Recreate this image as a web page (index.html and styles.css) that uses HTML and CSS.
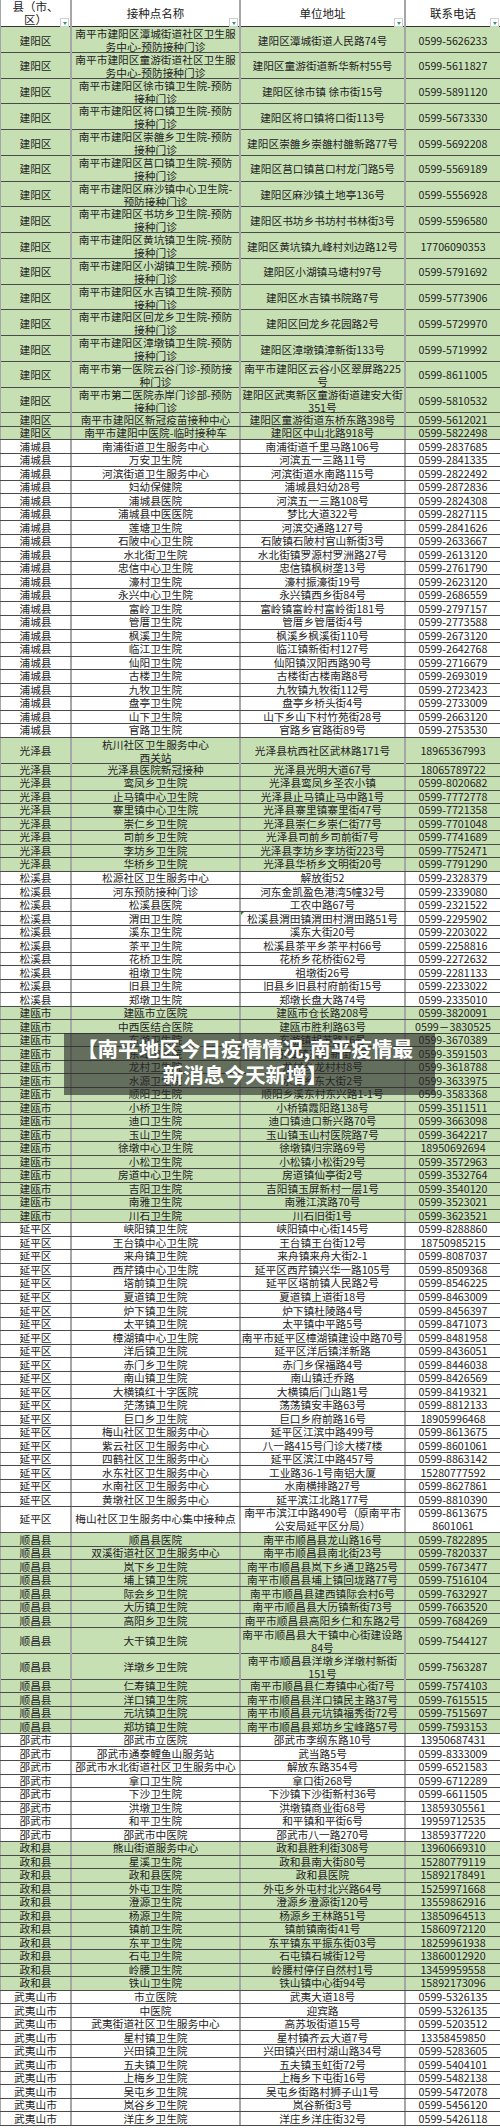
FILE: index.html
```html
<!DOCTYPE html>
<html lang="zh-CN">
<head>
<meta charset="utf-8">
<title>南平市新冠疫苗接种点</title>
<link rel="stylesheet" href="styles.css">
</head>
<body>
<div class="page">
<div class="sheet">
  <div class="row hd">
    <div class="c h">县（市、<br>区）<span class="flt"></span></div>
    <div class="c h">接种点名称<span class="flt"></span></div>
    <div class="c h">单位地址<span class="flt"></span></div>
    <div class="c h">联系电话<span class="flt"></span></div>
  </div>

  <div class="row g d"><div class="c">建阳区</div><div class="c">南平市建阳区潭城街道社区卫生服<br>务中心-预防接种门诊</div><div class="c">建阳区潭城街道人民路74号</div><div class="c">0599-5626233</div></div>
  <div class="row g d"><div class="c">建阳区</div><div class="c">南平市建阳区童游街道社区卫生服<br>务中心-预防接种门诊</div><div class="c">建阳区童游街道新华新村55号</div><div class="c">0599-5611827</div></div>
  <div class="row g d"><div class="c">建阳区</div><div class="c">南平市建阳区徐市镇卫生院-预防<br>接种门诊</div><div class="c">建阳区徐市镇 徐市街15号</div><div class="c">0599-5891120</div></div>
  <div class="row g d"><div class="c">建阳区</div><div class="c">南平市建阳区将口镇卫生院-预防<br>接种门诊</div><div class="c">建阳区将口镇将口街113号</div><div class="c">0599-5673330</div></div>
  <div class="row g d"><div class="c">建阳区</div><div class="c">南平市建阳区崇雒乡卫生院-预防<br>接种门诊</div><div class="c">建阳区崇雒乡崇雒村雒新路77号</div><div class="c">0599-5692208</div></div>
  <div class="row g d"><div class="c">建阳区</div><div class="c">南平市建阳区莒口镇卫生院-预防<br>接种门诊</div><div class="c">建阳区莒口镇莒口村龙门路5号</div><div class="c">0599-5569189</div></div>
  <div class="row g d"><div class="c">建阳区</div><div class="c">南平市建阳区麻沙镇中心卫生院-<br>预防接种门诊</div><div class="c">建阳区麻沙镇土地亭136号</div><div class="c">0599-5556928</div></div>
  <div class="row g d"><div class="c">建阳区</div><div class="c">南平市建阳区书坊乡卫生院-预防<br>接种门诊</div><div class="c">建阳区书坊乡书坊村书林街3号</div><div class="c">0599-5596580</div></div>
  <div class="row g d"><div class="c">建阳区</div><div class="c">南平市建阳区黄坑镇卫生院-预防<br>接种门诊</div><div class="c">建阳区黄坑镇九峰村刘边路12号</div><div class="c">17706090353</div></div>
  <div class="row g d"><div class="c">建阳区</div><div class="c">南平市建阳区小湖镇卫生院-预防<br>接种门诊</div><div class="c">建阳区小湖镇马塘村97号</div><div class="c">0599-5791692</div></div>
  <div class="row g d"><div class="c">建阳区</div><div class="c">南平市建阳区水吉镇卫生院-预防<br>接种门诊</div><div class="c">建阳区水吉镇书院路7号</div><div class="c">0599-5773906</div></div>
  <div class="row g d"><div class="c">建阳区</div><div class="c">南平市建阳区回龙乡卫生院-预防<br>接种门诊</div><div class="c">建阳区回龙乡花园路2号</div><div class="c">0599-5729970</div></div>
  <div class="row g d"><div class="c">建阳区</div><div class="c">南平市建阳区漳墩镇卫生院-预防<br>接种门诊</div><div class="c">建阳区漳墩镇漳新街133号</div><div class="c">0599-5719992</div></div>
  <div class="row g d"><div class="c">建阳区</div><div class="c">南平市第一医院云谷门诊-预防接<br>种门诊</div><div class="c">南平市建阳区云谷小区翠屏路225<br>号</div><div class="c">0599-8611005</div></div>
  <div class="row g d"><div class="c">建阳区</div><div class="c">南平市第二医院赤岸门诊部-预防<br>接种门诊</div><div class="c">建阳区武夷新区童游街道建安大街<br>351号</div><div class="c">0599-5810532</div></div>
  <div class="row g"><div class="c">建阳区</div><div class="c">南平市建阳区新冠疫苗接种中心</div><div class="c">建阳区童游街道东桥东路398号</div><div class="c">0599-5612021</div></div>
  <div class="row g"><div class="c">建阳区</div><div class="c">南平市建阳中医院-临时接种车</div><div class="c">建阳区中山北路918号</div><div class="c">0599-5822498</div></div>

  <div class="row"><div class="c">浦城县</div><div class="c">南浦街道卫生服务中心</div><div class="c">南浦街道千里马路106号</div><div class="c">0599-2837685</div></div>
  <div class="row"><div class="c">浦城县</div><div class="c">万安卫生院</div><div class="c">河滨五一三路11号</div><div class="c">0599-2841335</div></div>
  <div class="row"><div class="c">浦城县</div><div class="c">河滨街道卫生服务中心</div><div class="c">河滨街道水南路115号</div><div class="c">0599-2822492</div></div>
  <div class="row"><div class="c">浦城县</div><div class="c">妇幼保健院</div><div class="c">浦城县妇幼28号</div><div class="c">0599-2872836</div></div>
  <div class="row"><div class="c">浦城县</div><div class="c">浦城县医院</div><div class="c">河滨五一三路108号</div><div class="c">0599-2824308</div></div>
  <div class="row"><div class="c">浦城县</div><div class="c">浦城县中医医院</div><div class="c">梦比大道322号</div><div class="c">0599-2827115</div></div>
  <div class="row"><div class="c">浦城县</div><div class="c">莲塘卫生院</div><div class="c">河滨交通路127号</div><div class="c">0599-2841626</div></div>
  <div class="row"><div class="c">浦城县</div><div class="c">石陂中心卫生院</div><div class="c">石陂镇石陂村官山新街3号</div><div class="c">0599-2633667</div></div>
  <div class="row"><div class="c">浦城县</div><div class="c">水北街卫生院</div><div class="c">水北街镇罗源村罗洲路27号</div><div class="c">0599-2613120</div></div>
  <div class="row"><div class="c">浦城县</div><div class="c">忠信中心卫生院</div><div class="c">忠信镇枫树垄13号</div><div class="c">0599-2761790</div></div>
  <div class="row"><div class="c">浦城县</div><div class="c">濠村卫生院</div><div class="c">濠村振濠街19号</div><div class="c">0599-2623120</div></div>
  <div class="row"><div class="c">浦城县</div><div class="c">永兴中心卫生院</div><div class="c">永兴镇西乡街84号</div><div class="c">0599-2686559</div></div>
  <div class="row"><div class="c">浦城县</div><div class="c">富岭卫生院</div><div class="c">富岭镇富岭村富岭街181号</div><div class="c">0599-2797157</div></div>
  <div class="row"><div class="c">浦城县</div><div class="c">管厝卫生院</div><div class="c">管厝乡管厝街4号</div><div class="c">0599-2773588</div></div>
  <div class="row"><div class="c">浦城县</div><div class="c">枫溪卫生院</div><div class="c">枫溪乡枫溪街110号</div><div class="c">0599-2673120</div></div>
  <div class="row"><div class="c">浦城县</div><div class="c">临江卫生院</div><div class="c">临江镇新街村127号</div><div class="c">0599-2642768</div></div>
  <div class="row"><div class="c">浦城县</div><div class="c">仙阳卫生院</div><div class="c">仙阳镇汉阳西路90号</div><div class="c">0599-2716679</div></div>
  <div class="row"><div class="c">浦城县</div><div class="c">古楼卫生院</div><div class="c">古楼街古楼南路8号</div><div class="c">0599-2693019</div></div>
  <div class="row"><div class="c">浦城县</div><div class="c">九牧卫生院</div><div class="c">九牧镇九牧街112号</div><div class="c">0599-2723423</div></div>
  <div class="row"><div class="c">浦城县</div><div class="c">盘亭卫生院</div><div class="c">盘亭乡桥头街4号</div><div class="c">0599-2733009</div></div>
  <div class="row"><div class="c">浦城县</div><div class="c">山下卫生院</div><div class="c">山下乡山下村竹苑街28号</div><div class="c">0599-2663120</div></div>
  <div class="row"><div class="c">浦城县</div><div class="c">官路卫生院</div><div class="c">官路乡官路街89号</div><div class="c">0599-2753530</div></div>

  <div class="row g d2"><div class="c">光泽县</div><div class="c">杭川社区卫生服务中心<br>西关站</div><div class="c">光泽县杭西社区武林路171号</div><div class="c">18965367993</div></div>
  <div class="row g"><div class="c">光泽县</div><div class="c">光泽县医院新冠接种</div><div class="c">光泽县光明大道67号</div><div class="c">18065789722</div></div>
  <div class="row g"><div class="c">光泽县</div><div class="c">鸾凤乡卫生院</div><div class="c">光泽县鸾凤乡圣农小镇</div><div class="c">0599-8020682</div></div>
  <div class="row g"><div class="c">光泽县</div><div class="c">止马镇中心卫生院</div><div class="c">光泽县止马镇止马中路1号</div><div class="c">0599-7772778</div></div>
  <div class="row g"><div class="c">光泽县</div><div class="c">寨里镇中心卫生院</div><div class="c">光泽县寨里镇寨里街47号</div><div class="c">0599-7721358</div></div>
  <div class="row g"><div class="c">光泽县</div><div class="c">崇仁乡卫生院</div><div class="c">光泽县崇仁乡崇仁街77号</div><div class="c">0599-7701048</div></div>
  <div class="row g"><div class="c">光泽县</div><div class="c">司前乡卫生院</div><div class="c">光泽县司前乡司前街7号</div><div class="c">0599-7741689</div></div>
  <div class="row g"><div class="c">光泽县</div><div class="c">李坊乡卫生院</div><div class="c">光泽县李坊乡李坊街223号</div><div class="c">0599-7752471</div></div>
  <div class="row g"><div class="c">光泽县</div><div class="c">华桥乡卫生院</div><div class="c">光泽县华桥乡文明街20号</div><div class="c">0599-7791290</div></div>

  <div class="row"><div class="c">松溪县</div><div class="c">松源社区卫生服务中心</div><div class="c">解放街52</div><div class="c">0599-2328379</div></div>
  <div class="row"><div class="c">松溪县</div><div class="c">河东预防接种门诊</div><div class="c">河东金凯盈色港湾5幢32号</div><div class="c">0599-2339080</div></div>
  <div class="row"><div class="c">松溪县</div><div class="c">松溪县医院</div><div class="c">工农中路67号</div><div class="c">0599-2321522</div></div>
  <div class="row"><div class="c">松溪县</div><div class="c">渭田卫生院</div><div class="c mark">松溪县渭田镇渭田村渭田路51号</div><div class="c">0599-2295902</div></div>
  <div class="row"><div class="c">松溪县</div><div class="c">溪东卫生院</div><div class="c">溪东大街20号</div><div class="c">0599-2203022</div></div>
  <div class="row"><div class="c">松溪县</div><div class="c">茶平卫生院</div><div class="c">松溪县茶平乡茶平村66号</div><div class="c">0599-2258816</div></div>
  <div class="row"><div class="c">松溪县</div><div class="c">花桥卫生院</div><div class="c">花桥乡花桥街62号</div><div class="c">0599-2272632</div></div>
  <div class="row"><div class="c">松溪县</div><div class="c">祖墩卫生院</div><div class="c">祖墩街26号</div><div class="c">0599-2281133</div></div>
  <div class="row"><div class="c">松溪县</div><div class="c">旧县卫生院</div><div class="c">旧县乡旧县村府前街15号</div><div class="c">0599-2233022</div></div>
  <div class="row"><div class="c">松溪县</div><div class="c">郑墩卫生院</div><div class="c">郑墩长盘大路74号</div><div class="c">0599-2335010</div></div>

  <div class="row g"><div class="c">建瓯市</div><div class="c">建瓯市立医院</div><div class="c">建瓯市仓长路208号</div><div class="c">0599-3820091</div></div>
  <div class="row g"><div class="c">建瓯市</div><div class="c">中西医结合医院</div><div class="c">建瓯市胜利路63号</div><div class="c">0599－3830525</div></div>
  <div class="row g"><div class="c">建瓯市</div><div class="c">东游卫生院</div><div class="c">东游镇胡苏路16号</div><div class="c">0599-3670389</div></div>
  <div class="row g"><div class="c">建瓯市</div><div class="c">东峰卫生院</div><div class="c">东峰镇东峰新街3号</div><div class="c">0599-3591503</div></div>
  <div class="row g"><div class="c">建瓯市</div><div class="c">龙村卫生院</div><div class="c">龙村乡龙村村8号</div><div class="c">0599-3618788</div></div>
  <div class="row g"><div class="c">建瓯市</div><div class="c">水源卫生院</div><div class="c">水源乡东大街2号</div><div class="c">0599-3633975</div></div>
  <div class="row g"><div class="c">建瓯市</div><div class="c">顺阳卫生院</div><div class="c">顺阳乡溪东村东兴路1-1号</div><div class="c">0599-3583368</div></div>
  <div class="row g"><div class="c">建瓯市</div><div class="c">小桥卫生院</div><div class="c">小桥镇霞阳路138号</div><div class="c">0599-3511511</div></div>
  <div class="row g"><div class="c">建瓯市</div><div class="c">迪口卫生院</div><div class="c">迪口镇迪口新兴路70号</div><div class="c">0599-3663098</div></div>
  <div class="row g"><div class="c">建瓯市</div><div class="c">玉山卫生院</div><div class="c">玉山镇玉山村医院路7号</div><div class="c">0599-3642217</div></div>
  <div class="row g"><div class="c">建瓯市</div><div class="c">徐墩中心卫生院</div><div class="c">徐墩镇归宗路69号</div><div class="c">18950692694</div></div>
  <div class="row g"><div class="c">建瓯市</div><div class="c">小松卫生院</div><div class="c">小松镇小松街29号</div><div class="c">0599-3572963</div></div>
  <div class="row g"><div class="c">建瓯市</div><div class="c">房道中心卫生院</div><div class="c">房道镇仙亭街2号</div><div class="c">0599-3532764</div></div>
  <div class="row g"><div class="c">建瓯市</div><div class="c">吉阳卫生院</div><div class="c">吉阳镇玉屏新村一层1号</div><div class="c">0599-3540120</div></div>
  <div class="row g"><div class="c">建瓯市</div><div class="c">南雅卫生院</div><div class="c">南雅江滨路70号</div><div class="c">0599-3523021</div></div>
  <div class="row g"><div class="c">建瓯市</div><div class="c">川石卫生院</div><div class="c">川石旧街1号</div><div class="c">0599-3623521</div></div>

  <div class="row"><div class="c">延平区</div><div class="c">峡阳镇卫生院</div><div class="c">峡阳镇中心街145号</div><div class="c">0599-8288860</div></div>
  <div class="row"><div class="c">延平区</div><div class="c">王台镇中心卫生院</div><div class="c">王台镇王台街12号</div><div class="c">18750985215</div></div>
  <div class="row"><div class="c">延平区</div><div class="c">来舟镇卫生院</div><div class="c">来舟镇来舟大街2-1</div><div class="c">0599-8087037</div></div>
  <div class="row"><div class="c">延平区</div><div class="c">西芹镇中心卫生院</div><div class="c">延平区西芹镇兴华一路105号</div><div class="c">0599-8509368</div></div>
  <div class="row"><div class="c">延平区</div><div class="c">塔前镇卫生院</div><div class="c">延平区塔前镇人民路2号</div><div class="c">0599-8546225</div></div>
  <div class="row"><div class="c">延平区</div><div class="c">夏道镇卫生院</div><div class="c">夏道镇上道街18号</div><div class="c">0599-8463009</div></div>
  <div class="row"><div class="c">延平区</div><div class="c">炉下镇卫生院</div><div class="c">炉下镇杜陵路4号</div><div class="c">0599-8456397</div></div>
  <div class="row"><div class="c">延平区</div><div class="c">太平镇卫生院</div><div class="c">太平镇中平路5号</div><div class="c">0599-8471073</div></div>
  <div class="row"><div class="c">延平区</div><div class="c">樟湖镇中心卫生院</div><div class="c">南平市延平区樟湖镇建设中路70号</div><div class="c">0599-8481958</div></div>
  <div class="row"><div class="c">延平区</div><div class="c">洋后镇卫生院</div><div class="c">延平区洋后镇洋新路</div><div class="c">0599-8436051</div></div>
  <div class="row"><div class="c">延平区</div><div class="c">赤门乡卫生院</div><div class="c">赤门乡保福路4号</div><div class="c">0599-8446038</div></div>
  <div class="row"><div class="c">延平区</div><div class="c">南山镇卫生院</div><div class="c">南山镇迁乔路</div><div class="c">0599-8426569</div></div>
  <div class="row"><div class="c">延平区</div><div class="c">大横镇红十字医院</div><div class="c">大横镇后门山路1号</div><div class="c">0599-8419321</div></div>
  <div class="row"><div class="c">延平区</div><div class="c">茫荡镇卫生院</div><div class="c">荡荡镇安丰路63号</div><div class="c">0599-8812133</div></div>
  <div class="row"><div class="c">延平区</div><div class="c">巨口乡卫生院</div><div class="c">巨口乡府前路16号</div><div class="c">18905996468</div></div>
  <div class="row"><div class="c">延平区</div><div class="c">梅山社区卫生服务中心</div><div class="c">延平区江滨中路499号</div><div class="c">0599-8613675</div></div>
  <div class="row"><div class="c">延平区</div><div class="c">紫云社区卫生服务中心</div><div class="c">八一路415号门诊大楼7楼</div><div class="c">0599-8601061</div></div>
  <div class="row"><div class="c">延平区</div><div class="c">四鹤社区卫生服务中心</div><div class="c">延平区滨江中路457号</div><div class="c">0599-8863142</div></div>
  <div class="row"><div class="c">延平区</div><div class="c">水东社区卫生服务中心</div><div class="c">工业路36-1号南铝大厦</div><div class="c">15280777592</div></div>
  <div class="row"><div class="c">延平区</div><div class="c">水南社区卫生服务中心</div><div class="c">水南横排路27号</div><div class="c">0599-8627861</div></div>
  <div class="row"><div class="c">延平区</div><div class="c">黄墩社区卫生服务中心</div><div class="c">延平滨江北路177号</div><div class="c">0599-8810390</div></div>
  <div class="row tr"><div class="c">延平区</div><div class="c">梅山社区卫生服务中心集中接种点</div><div class="c">南平市滨江中路490号（原南平市<br>公安局延平区分局）</div><div class="c">0599-8613675<br>8601061</div></div>

  <div class="row g"><div class="c">顺昌县</div><div class="c">顺昌县医院</div><div class="c">南平市顺昌县龙山路16号</div><div class="c">0599-7822895</div></div>
  <div class="row g"><div class="c">顺昌县</div><div class="c">双溪街道社区卫生服务中心</div><div class="c">南平市顺昌县南北街23号</div><div class="c">0599-7820337</div></div>
  <div class="row g"><div class="c">顺昌县</div><div class="c">岚下乡卫生院</div><div class="c">南平市顺昌县岚下乡通卫路25号</div><div class="c">0599-7673477</div></div>
  <div class="row g"><div class="c">顺昌县</div><div class="c">埔上镇卫生院</div><div class="c">南平市顺昌县埔上镇回垅路77号</div><div class="c">0599-7516104</div></div>
  <div class="row g"><div class="c">顺昌县</div><div class="c">际会乡卫生院</div><div class="c">南平市顺昌县建西镇际会村6号</div><div class="c">0599-7632927</div></div>
  <div class="row g"><div class="c">顺昌县</div><div class="c">大历镇卫生院</div><div class="c">南平市顺昌县大历镇新街73号</div><div class="c">0599-7663520</div></div>
  <div class="row g"><div class="c">顺昌县</div><div class="c">高阳乡卫生院</div><div class="c">南平市顺昌县高阳乡仁和东路2号</div><div class="c">0599-7684269</div></div>
  <div class="row g d2"><div class="c">顺昌县</div><div class="c">大干镇卫生院</div><div class="c">南平市顺昌县大干镇中心街建设路<br>84号</div><div class="c">0599-7544127</div></div>
  <div class="row g d2"><div class="c">顺昌县</div><div class="c">洋墩乡卫生院</div><div class="c">南平市顺昌县洋墩乡洋墩村新街<br>151号</div><div class="c">0599-7563287</div></div>
  <div class="row g"><div class="c">顺昌县</div><div class="c">仁寿镇卫生院</div><div class="c">南平市顺昌县仁寿镇中心街7号</div><div class="c">0599-7574103</div></div>
  <div class="row g"><div class="c">顺昌县</div><div class="c">洋口镇卫生院</div><div class="c">南平市顺昌县洋口镇民主路37号</div><div class="c">0599-7615515</div></div>
  <div class="row g"><div class="c">顺昌县</div><div class="c">元坑镇卫生院</div><div class="c">南平市顺昌县元坑镇福秀街72号</div><div class="c">0599-7515697</div></div>
  <div class="row g"><div class="c">顺昌县</div><div class="c">郑坊镇卫生院</div><div class="c">南平市顺昌县郑坊乡宝峰路57号</div><div class="c">0599-7593153</div></div>

  <div class="row"><div class="c">邵武市</div><div class="c">邵武市立医院</div><div class="c">邵武市李纲东路10号</div><div class="c">13950687431</div></div>
  <div class="row"><div class="c">邵武市</div><div class="c">邵武市通泰鲤鱼山服务站</div><div class="c">武当路5号</div><div class="c">0599-8333009</div></div>
  <div class="row"><div class="c">邵武市</div><div class="c">邵武市水北街道社区卫生服务中心</div><div class="c">解放东路354号</div><div class="c">0599-6521583</div></div>
  <div class="row"><div class="c">邵武市</div><div class="c">拿口卫生院</div><div class="c">拿口街268号</div><div class="c">0599-6712289</div></div>
  <div class="row"><div class="c">邵武市</div><div class="c">下沙卫生院</div><div class="c">下沙镇下沙街新村36号</div><div class="c">0599-6611505</div></div>
  <div class="row"><div class="c">邵武市</div><div class="c">洪墩卫生院</div><div class="c">洪墩镇商业街68号</div><div class="c">13859305561</div></div>
  <div class="row"><div class="c">邵武市</div><div class="c">和平卫生院</div><div class="c">和平镇和平街6号</div><div class="c">19959712535</div></div>
  <div class="row"><div class="c">邵武市</div><div class="c">邵武市中医院</div><div class="c">邵武市八一路270号</div><div class="c">13859377220</div></div>

  <div class="row g"><div class="c">政和县</div><div class="c">熊山街道服务中心</div><div class="c">政和县胜利街308号</div><div class="c">13960669310</div></div>
  <div class="row g"><div class="c">政和县</div><div class="c">星溪卫生院</div><div class="c">政和县南大街80号</div><div class="c">15280779119</div></div>
  <div class="row g"><div class="c">政和县</div><div class="c">政和县医院</div><div class="c">政和县医院</div><div class="c">15892178491</div></div>
  <div class="row g"><div class="c">政和县</div><div class="c">外屯卫生院</div><div class="c">外屯乡外屯村北兴路64号</div><div class="c">15259971668</div></div>
  <div class="row g"><div class="c">政和县</div><div class="c">澄源卫生院</div><div class="c">澄源乡澄源街120号</div><div class="c">13559862916</div></div>
  <div class="row g"><div class="c">政和县</div><div class="c">杨源卫生院</div><div class="c">杨源乡王林路51号</div><div class="c">13850964513</div></div>
  <div class="row g"><div class="c">政和县</div><div class="c">镇前卫生院</div><div class="c">镇前镇南街41号</div><div class="c">15860972120</div></div>
  <div class="row g"><div class="c">政和县</div><div class="c">东平卫生院</div><div class="c">东平镇东平振东街03号</div><div class="c">18259961938</div></div>
  <div class="row g"><div class="c">政和县</div><div class="c">石屯卫生院</div><div class="c">石屯镇石城街12号</div><div class="c">13860012920</div></div>
  <div class="row g"><div class="c">政和县</div><div class="c">岭腰卫生院</div><div class="c">岭腰村停仔自然村1号</div><div class="c">13459959558</div></div>
  <div class="row g"><div class="c">政和县</div><div class="c">铁山卫生院</div><div class="c">铁山镇中心街94号</div><div class="c">15892173096</div></div>

  <div class="row"><div class="c">武夷山市</div><div class="c">市立医院</div><div class="c">武夷大道18号</div><div class="c">0599-5326135</div></div>
  <div class="row"><div class="c">武夷山市</div><div class="c">中医院</div><div class="c">迎宾路</div><div class="c">0599-5326135</div></div>
  <div class="row"><div class="c">武夷山市</div><div class="c">武夷街道社区卫生服务中心</div><div class="c">高苏坂街道15号</div><div class="c">0599-5203512</div></div>
  <div class="row"><div class="c">武夷山市</div><div class="c">星村镇卫生院</div><div class="c">星村镇齐云大道7号</div><div class="c">13358459850</div></div>
  <div class="row"><div class="c">武夷山市</div><div class="c">兴田镇卫生院</div><div class="c">兴田镇兴田村湖山路34号</div><div class="c">0599-5283605</div></div>
  <div class="row"><div class="c">武夷山市</div><div class="c">五夫镇卫生院</div><div class="c">五夫镇玉虹街72号</div><div class="c">0599-5404101</div></div>
  <div class="row"><div class="c">武夷山市</div><div class="c">上梅乡卫生院</div><div class="c">上梅乡下屯街16号</div><div class="c">0599-5482138</div></div>
  <div class="row"><div class="c">武夷山市</div><div class="c">吴屯乡卫生院</div><div class="c">吴屯乡街路村狮子山1号</div><div class="c">0599-5472078</div></div>
  <div class="row"><div class="c">武夷山市</div><div class="c">岚谷乡卫生院</div><div class="c">岚谷新街3号</div><div class="c">0599-5456120</div></div>
  <div class="row"><div class="c">武夷山市</div><div class="c">洋庄乡卫生院</div><div class="c">洋庄乡洋庄街32号</div><div class="c">0599-5426118</div></div>
</div>
<div class="caption">【南平地区今日疫情情况,南平疫情最<br>新消息今天新增】</div>
</div>
</body>
</html>
```

FILE: styles.css
```css
html, body {
  margin: 0;
  padding: 0;
  background: #ffffff;
}

.page {
  position: relative;
  width: 500px;
}

.sheet {
  width: 500px;
  font-family: "Noto Sans CJK SC", "Noto Sans", sans-serif;
  font-size: 10.7px;
  color: #222222;
}

.row {
  display: grid;
  grid-template-columns: 70px 169px 165px 96px;
  height: 13.53px;
  box-sizing: border-box;
  border-bottom: 1px solid #4a4a4a;
  background: #ffffff;
}

.row.g {
  background: #c6e0b4;
}

.row.d {
  height: 25.75px;
}

.row.d2 {
  height: 26px;
}

.row.tr {
  height: 26.3px;
}

.c {
  display: flex;
  align-items: center;
  justify-content: center;
  text-align: center;
  white-space: nowrap;
  line-height: 12px;
  overflow: visible;
  position: relative;
}

.row.d .c,
.row.d2 .c {
  line-height: 13px;
}

.c + .c {
  border-left: 2px solid #a6a6a6;
}

.row .c:first-child {
  border-left: 1px solid #a6a6a6;
}

.row.tr .c {
  line-height: 12.5px;
}

.hd {
  height: 27px;
  border-bottom: 1px solid #333333;
  background: #ffffff;
}

.c.h {
  font-size: 11.5px;
  line-height: 13px;
  color: #1a1a1a;
  padding-bottom: 1px;
}

.flt {
  position: absolute;
  right: 1px;
  bottom: 0;
  width: 9px;
  height: 9px;
  box-sizing: border-box;
  border: 1px solid #cfcfcf;
  background: #ffffff;
}

.flt::after {
  content: "";
  position: absolute;
  left: 2px;
  top: 3px;
  border-left: 2.5px solid transparent;
  border-right: 2.5px solid transparent;
  border-top: 3px solid #2f9a6c;
}

.mark::before {
  content: "";
  position: absolute;
  left: 0;
  top: 0;
  border-top: 3px solid #2a8a2a;
  border-right: 3px solid transparent;
}

.caption {
  position: absolute;
  left: 64px;
  top: 1033px;
  width: 371px;
  height: 62px;
  box-sizing: border-box;
  padding: 2px 9px 0 0;
  background: rgba(40, 40, 40, 0.62);
  color: #ffffff;
  font-family: "Noto Sans CJK SC", "Noto Sans", sans-serif;
  font-weight: 700;
  font-size: 20.6px;
  line-height: 26px;
  text-align: center;
  white-space: nowrap;
}
```
